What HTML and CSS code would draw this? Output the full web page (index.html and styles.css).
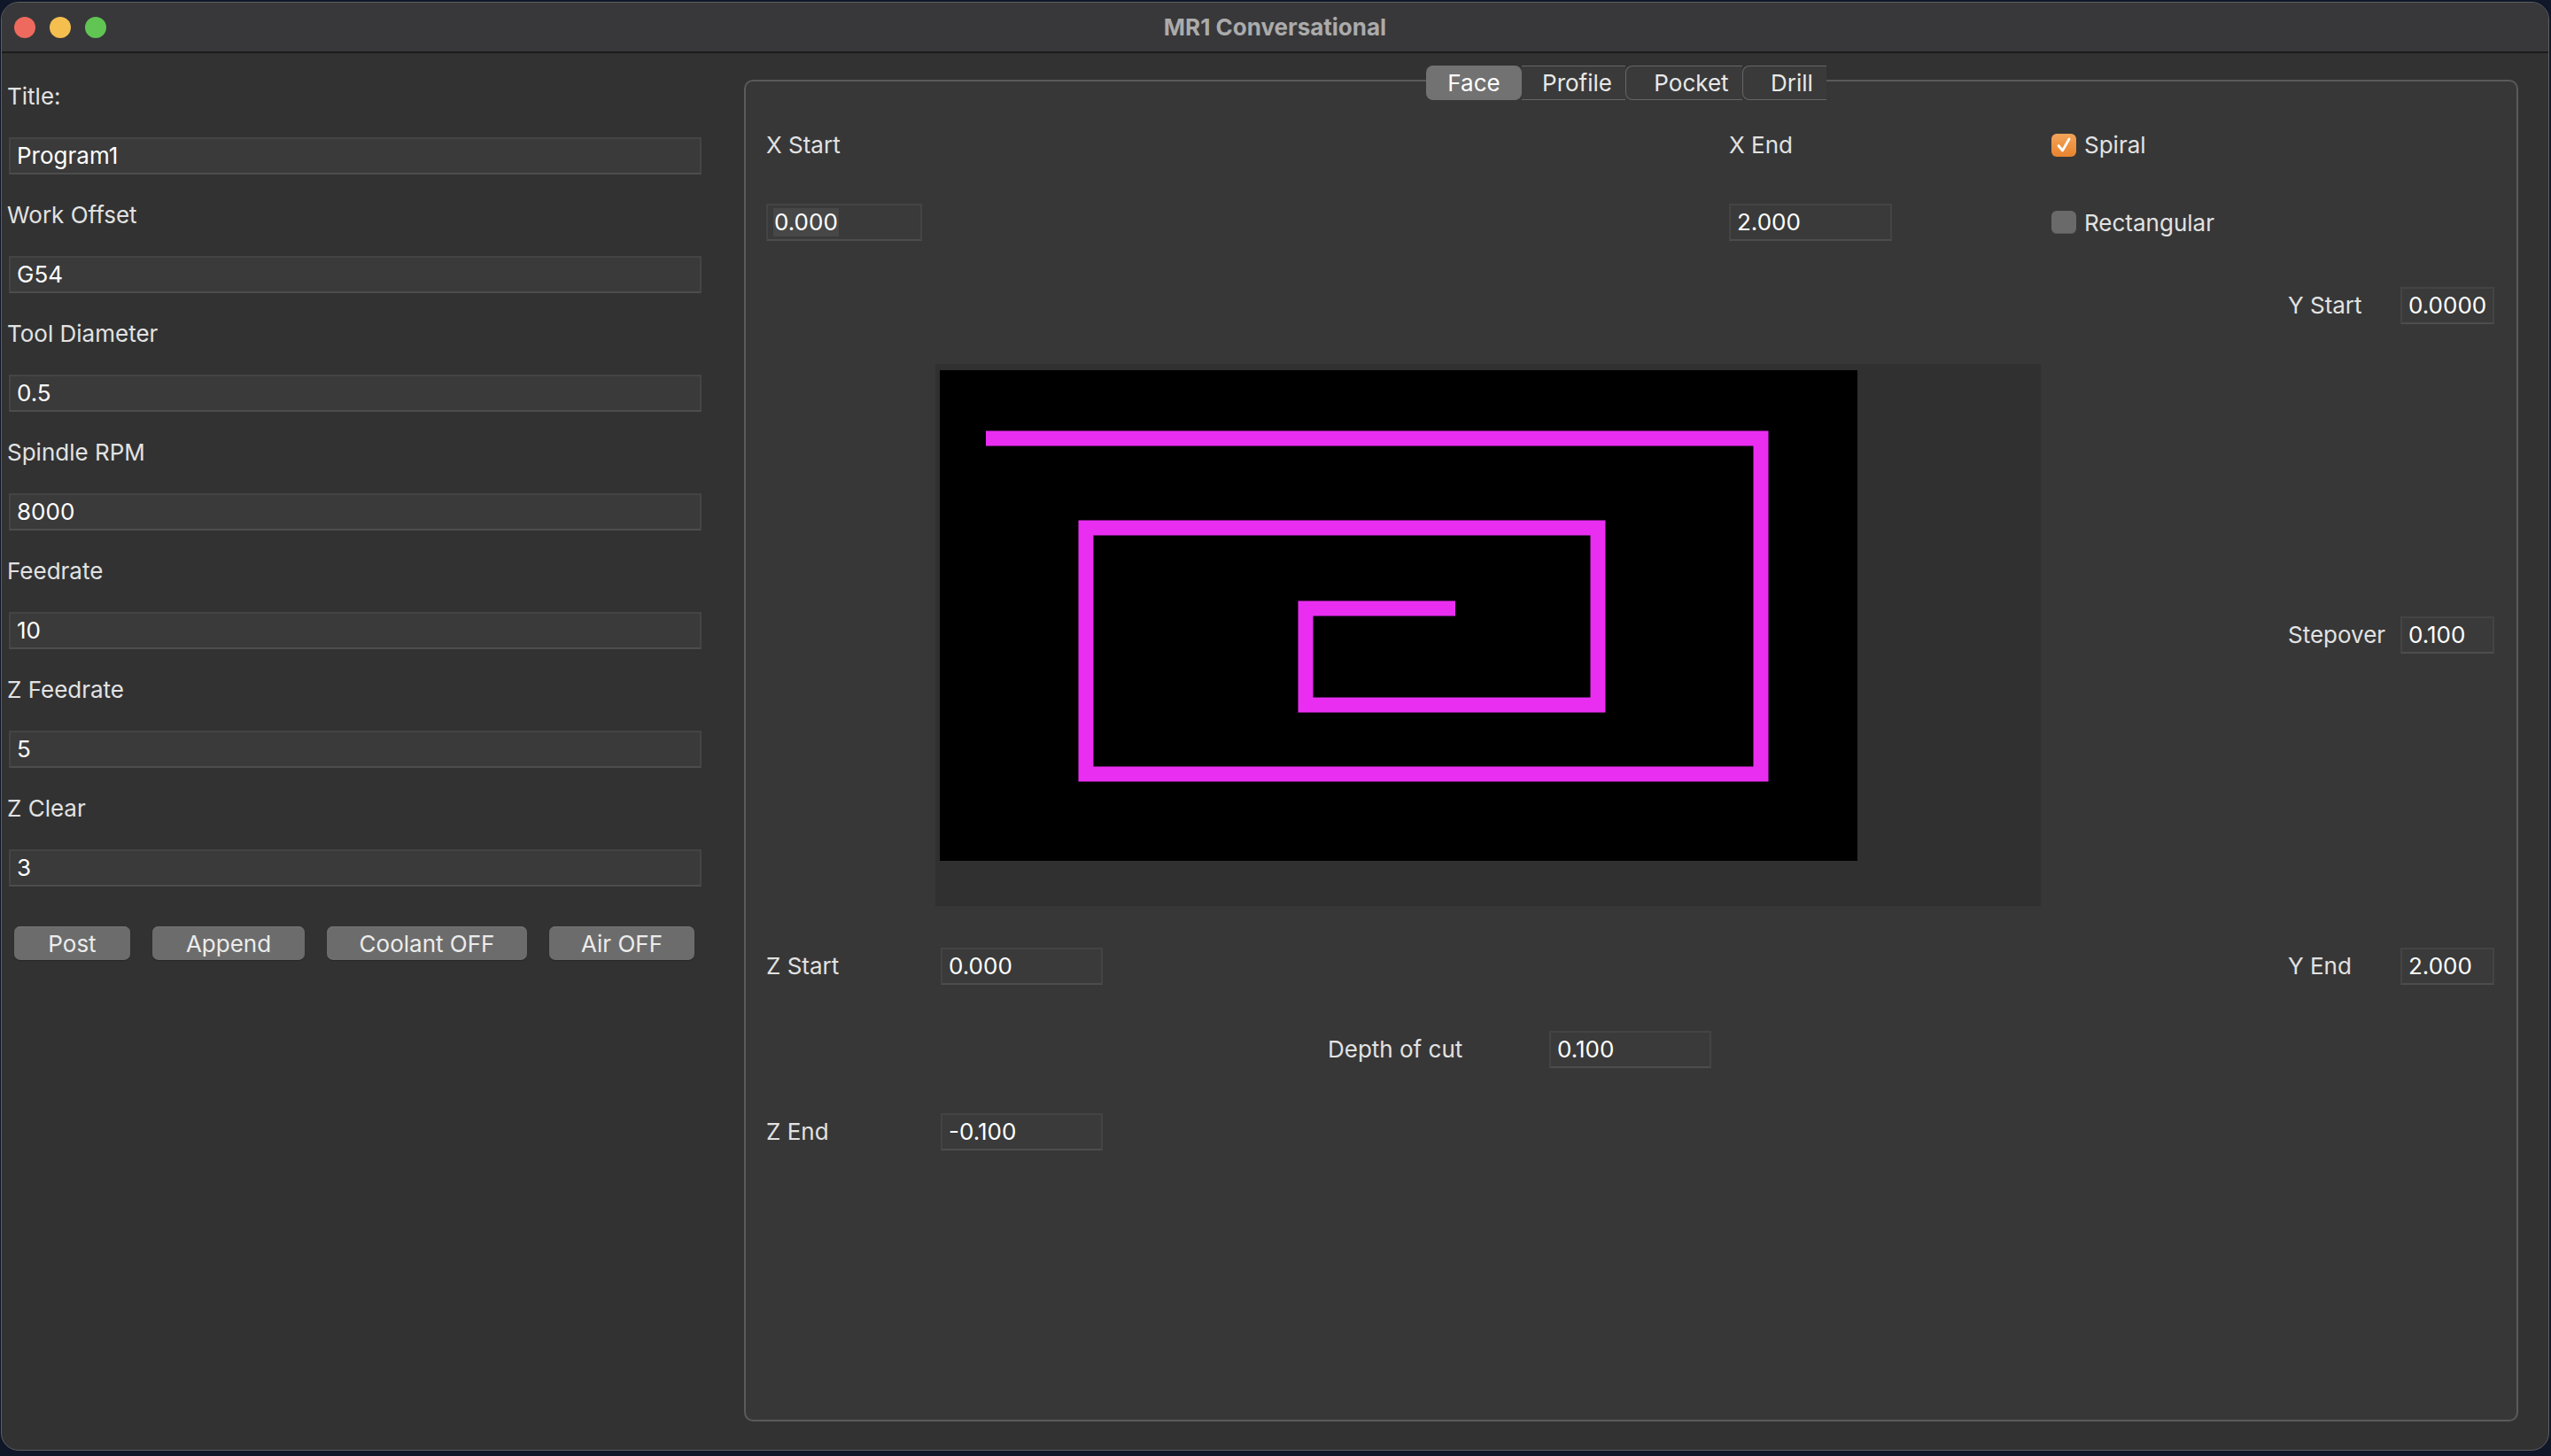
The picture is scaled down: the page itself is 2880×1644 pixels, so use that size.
FILE: index.html
```html
<!DOCTYPE html>
<html>
<head>
<meta charset="utf-8">
<title>MR1 Conversational</title>
<link rel="stylesheet" href="styles.css">
</head>
<body>
<div class="window">
  <div class="titlebar">
    <div class="lights">
      <span class="light red"></span>
      <span class="light yellow"></span>
      <span class="light green"></span>
    </div>
    <div class="title">MR1 Conversational</div>
  </div>
  <div class="content">
    <div class="left">
      <div class="lbl">Title:</div>
      <div class="field">Program1</div>
      <div class="lbl">Work Offset</div>
      <div class="field">G54</div>
      <div class="lbl">Tool Diameter</div>
      <div class="field">0.5</div>
      <div class="lbl">Spindle RPM</div>
      <div class="field">8000</div>
      <div class="lbl">Feedrate</div>
      <div class="field">10</div>
      <div class="lbl">Z Feedrate</div>
      <div class="field">5</div>
      <div class="lbl">Z Clear</div>
      <div class="field">3</div>
      <div class="buttons">
        <button class="btn btn-post">Post</button>
        <button class="btn btn-append">Append</button>
        <button class="btn btn-coolant">Coolant OFF</button>
        <button class="btn btn-air">Air OFF</button>
      </div>
    </div>
    <div class="tabwidget">
      <div class="tabs">
        <div class="tab tab-face active">Face</div>
        <div class="tab tab-profile">Profile</div>
        <div class="tab tab-pocket">Pocket</div>
        <div class="tab tab-drill">Drill</div>
      </div>
      <div class="grid">
        <div class="lbl a-xsl">X Start</div>
        <div class="field a-xsi"><span class="sel">0.000</span></div>
        <div class="lbl a-xel">X End</div>
        <div class="field a-xei">2.000</div>
        <div class="chk a-chk1"><span class="box on"><svg width="28" height="26" viewBox="0 0 28 26"><path d="M8 13.5 L12.5 19 L20 6" fill="none" stroke="#fff" stroke-width="2.8" stroke-linecap="round" stroke-linejoin="round"/></svg></span>Spiral</div>
        <div class="chk a-chk2"><span class="box off"></span>Rectangular</div>
        <div class="lbl a-ysl">Y Start</div>
        <div class="field a-ysi">0.0000</div>
        <div class="view a-cv">
          <svg class="toolpath" width="1036" height="554" viewBox="0 0 1036 554">
            <path d="M52 77H927V456H165V178H743V378H413V269H582" fill="none" stroke="#e92ef2" stroke-width="17" stroke-linecap="butt" stroke-linejoin="miter"/>
          </svg>
        </div>
        <div class="lbl a-stl">Stepover</div>
        <div class="field a-sti">0.100</div>
        <div class="lbl a-zsl">Z Start</div>
        <div class="field a-zsi">0.000</div>
        <div class="lbl a-yel">Y End</div>
        <div class="field a-yei">2.000</div>
        <div class="lbl a-dl">Depth of cut</div>
        <div class="field a-di">0.100</div>
        <div class="lbl a-zel">Z End</div>
        <div class="field a-zei">-0.100</div>
      </div>
    </div>
  </div>
</div>
</body>
</html>
```
FILE: styles.css
```css
html, body {
  margin: 0;
  padding: 0;
}
body {
  background: #0f1729;
  font-family: Inter, "Liberation Sans", "DejaVu Sans", sans-serif;
  overflow: hidden;
}
.window {
  box-sizing: border-box;
  width: 2877px;
  height: 1636px;
  margin: 2px 0 0 1px;
  border: 1px solid #5e5e5e;
  border-radius: 20px;
  background: #323232;
  overflow: hidden;
  display: flex;
  flex-direction: column;
}
.titlebar {
  flex: none;
  height: 55px;
  background: #38383a;
  border-bottom: 2px solid #1c1c1c;
  display: grid;
  grid-template-columns: 1fr auto 1fr;
  align-items: center;
}
.lights {
  display: flex;
  gap: 16px;
  padding-left: 14px;
}
.light {
  width: 24px;
  height: 24px;
  border-radius: 50%;
}
.red { background: #ee6a5f; }
.yellow { background: #f5bf4f; }
.green { background: #61c554; }
.title {
  font-weight: 700;
  font-size: 26px;
  color: #ababab;
}
.content {
  flex: 1;
  display: flex;
  min-height: 0;
}
.left {
  box-sizing: border-box;
  width: 838px;
  flex: none;
  padding: 28px 0 0 6px;
  display: flex;
  flex-direction: column;
  gap: 25px;
}
.lbl {
  height: 42px;
  line-height: 42px;
  font-size: 26px;
  color: #e2e2e2;
  white-space: nowrap;
}
.field {
  box-sizing: border-box;
  height: 42px;
  line-height: 38px;
  border: 2px solid #444444;
  border-bottom-color: #4d4d4d;
  background: #3a3a3a;
  color: #ffffff;
  font-size: 26px;
  padding-left: 7px;
  white-space: nowrap;
}
.left .field {
  margin-left: 2px;
  width: 782px;
}
.sel {
  display: inline-block;
  background: #474747;
  line-height: 32px;
  padding: 0 1px;
  margin-left: -1px;
}
.buttons {
  display: flex;
  gap: 25px;
  margin-top: 20px;
  padding-left: 8px;
}
.btn {
  box-sizing: border-box;
  height: 38px;
  border: none;
  border-radius: 7px;
  background: #6c6c6c;
  box-shadow: inset 0 1px 0 #767676, 0 1px 1px #262626;
  color: #ececec;
  font-family: Inter, "Liberation Sans", sans-serif;
  font-size: 26px;
  padding: 0;
}
.btn-post { width: 131px; }
.btn-append { width: 172px; }
.btn-coolant { width: 226px; }
.btn-air { width: 164px; }

.tabwidget {
  flex: 1;
  margin: 30px 34px 32px 0;
  border: 2px solid #5a5a5a;
  border-radius: 10px;
  background: #373737;
  display: flex;
  flex-direction: column;
}
.tabs {
  display: flex;
  align-self: flex-start;
  height: 39px;
  margin: -18px 0 0 768px;
}
.tab {
  box-sizing: border-box;
  height: 39px;
  line-height: 37px;
  text-align: center;
  font-size: 26px;
  color: #e8e8e8;
  background: #3a3a3a;
  border-top: 1px solid #666666;
  border-bottom: 1px solid #666666;
}
.tab.active {
  background: #727272;
  border-color: #727272;
  color: #ffffff;
  border-radius: 8px;
}
.tab-pocket, .tab-drill {
  border-left: 1px solid #666666;
  border-radius: 8px 0 0 8px;
  padding-left: 16px;
}
.tab-face { width: 108px; }
.tab-profile { width: 117px; padding-left: 8px; }
.tab-pocket { width: 132px; }
.tab-drill { width: 95px; }

.grid {
  margin-top: 7px;
  padding-left: 23px;
  display: grid;
  grid-template-columns: 191px 443px 250px 203px 352px 279px 127px 106px;
  grid-template-rows: 87px 88px 100px 644px 104px 84px 102px;
  align-items: center;
  justify-items: start;
  grid-template-areas:
    "xsl . . . xel chk1 . ."
    "xsi . . . xei chk2 . ."
    ". . . . . . ysl ysi"
    ". cv cv cv cv . stl sti"
    "zsl zsi . . . . yel yei"
    ". . dl di . . . ."
    "zel zei . . . . . .";
}
.a-xsl { grid-area: xsl; }
.a-xsi { grid-area: xsi; width: 176px; }
.a-xel { grid-area: xel; }
.a-xei { grid-area: xei; width: 184px; }
.a-chk1 { grid-area: chk1; }
.a-chk2 { grid-area: chk2; }
.a-ysl { grid-area: ysl; }
.a-ysi { grid-area: ysi; width: 106px; }
.a-cv { grid-area: cv; }
.a-stl { grid-area: stl; }
.a-sti { grid-area: sti; width: 106px; }
.a-zsl { grid-area: zsl; }
.a-zsi { grid-area: zsi; width: 183px; margin-left: 6px; }
.a-yel { grid-area: yel; }
.a-yei { grid-area: yei; width: 106px; }
.a-dl { grid-area: dl; }
.a-di { grid-area: di; width: 183px; }
.a-zel { grid-area: zel; }
.a-zei { grid-area: zei; width: 183px; margin-left: 6px; }

.chk {
  display: flex;
  align-items: center;
  gap: 9px;
  margin-left: 12px;
  font-size: 26px;
  color: #e2e2e2;
  height: 42px;
}
.box {
  box-sizing: border-box;
  width: 28px;
  height: 26px;
  border-radius: 6px;
  display: block;
}
.box svg { display: block; }
.box.on {
  background: linear-gradient(#f2a45a, #e8842e);
}
.box.off {
  background: #6a6a6a;
  box-shadow: inset 0 -1px 0 #5a5a5a;
}
.view {
  box-sizing: border-box;
  width: 1248px;
  height: 612px;
  background: #303030;
  padding: 7px 0 0 5px;
}
.toolpath {
  display: block;
  background: #000000;
}
```
